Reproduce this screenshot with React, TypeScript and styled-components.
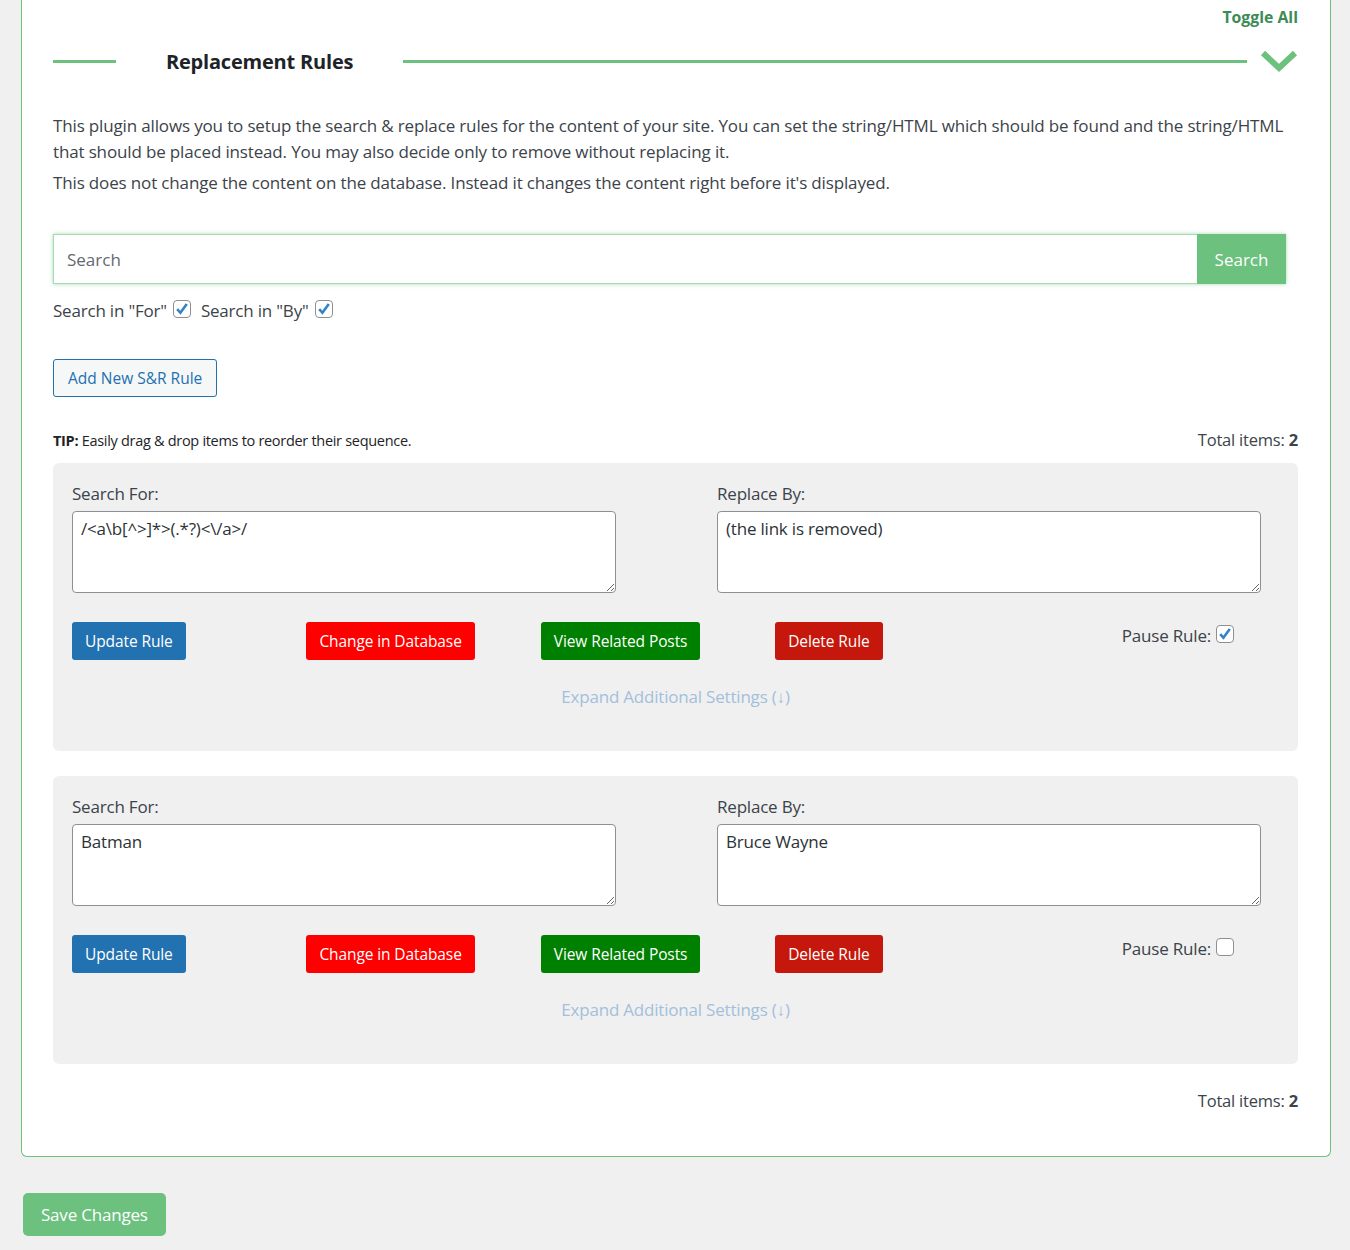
import React from 'react';
import styled, { createGlobalStyle } from 'styled-components';

const GlobalStyle = createGlobalStyle`
  html, body {
    margin: 0;
    padding: 0;
    background: #f0f0f1;
    font-family: 'Open Sans', 'Noto Sans', sans-serif;
    color: #3c434a;
  }
`;

const Page = styled.div`
  padding: 0 19px 14px 21px;
`;

const Panel = styled.div`
  background: #fff;
  border: 1px solid #6bc17d;
  border-top: none;
  border-radius: 0 0 6px 6px;
  padding: 4px 32px 44px 31px;
`;

const ToggleRow = styled.div`
  display: flex;
  justify-content: flex-end;
`;

const ToggleAll = styled.a`
  font-size: 15.8px;
  font-weight: 700;
  color: #3d8b57;
  cursor: pointer;
  line-height: 26px;
`;

const HeaderRow = styled.div`
  display: flex;
  align-items: center;
  margin-top: 13px;
  height: 36px;
`;

const Rule = styled.span<{ $grow?: boolean }>`
  height: 3px;
  background: #6bc17d;
  ${({ $grow }) => ($grow ? 'flex: 1;' : 'width: 63px;')}
`;

const Title = styled.h2`
  margin: 0 50px;
  font-size: 20px;
  font-weight: 700;
  color: #1d2327;
  letter-spacing: -0.2px;
`;

const Chevron = styled.svg`
  margin-left: 13px;
  flex: none;
`;

const Intro = styled.p`
  margin: 0;
  font-size: 17px;
  line-height: 26px;
  letter-spacing: -0.15px;
  & + & {
    margin-top: 5px;
  }
`;

const IntroBlock = styled.div`
  margin-top: 34px;
`;

const SearchBar = styled.div`
  display: flex;
  margin-top: 38px;
  width: 1233px;
  box-shadow: 0 0 4px rgba(107, 193, 125, 0.6);
`;

const SearchInput = styled.input`
  flex: 1;
  height: 50px;
  box-sizing: border-box;
  border: 1px solid #a8dbb3;
  border-right: none;
  padding: 0 13px;
  font-size: 17px;
  font-family: inherit;
  color: #3c434a;
  outline: none;
  &::placeholder {
    color: #646970;
  }
`;

const SearchButton = styled.button`
  width: 89px;
  height: 50px;
  border: none;
  background: #6bc17d;
  color: #fff;
  font-size: 17px;
  font-family: inherit;
  cursor: pointer;
`;

const CheckRow = styled.div`
  display: flex;
  align-items: center;
  gap: 10px;
  margin-top: 15px;
  font-size: 17px;
  letter-spacing: -0.2px;
`;

const CheckLabel = styled.label`
  display: inline-flex;
  align-items: center;
  gap: 6px;
`;

const Box = styled.span`
  display: inline-flex;
  align-items: center;
  justify-content: center;
  width: 18px;
  height: 18px;
  box-sizing: border-box;
  border: 1px solid #8c8f94;
  border-radius: 4px;
  background: #fff;
  position: relative;
  top: -2px;
`;

const OutlineButton = styled.button`
  margin-top: 37px;
  height: 38px;
  padding: 0 14px;
  border: 1px solid #2271b1;
  border-radius: 3px;
  background: #f6f7f7;
  color: #2271b1;
  font-size: 15.5px;
  font-family: inherit;
  cursor: pointer;
`;

const InfoRow = styled.div`
  display: flex;
  justify-content: space-between;
  align-items: baseline;
  margin-top: 31px;
`;

const Tip = styled.span`
  font-size: 14.5px;
  color: #1d2327;
  letter-spacing: -0.3px;
`;

const Total = styled.span`
  font-size: 16.5px;
  letter-spacing: -0.2px;
  b {
    font-weight: 700;
  }
`;

const Card = styled.div`
  margin-top: 12px;
  background: #f0f0f0;
  border-radius: 6px;
  padding: 20px 19px 43px;
  & + & {
    margin-top: 25px;
  }
`;

const Fields = styled.div`
  display: grid;
  grid-template-columns: 645px 1fr;
`;

const FieldLabel = styled.div`
  font-size: 17px;
  line-height: 22px;
  letter-spacing: -0.2px;
  margin-bottom: 6px;
`;

const Area = styled.textarea`
  display: block;
  width: 544px;
  height: 82px;
  box-sizing: border-box;
  border: 1px solid #8c8f94;
  border-radius: 4px;
  padding: 5px 8px;
  font-size: 17px;
  font-family: inherit;
  color: #2c3338;
  letter-spacing: -0.2px;
  resize: vertical;
  background: #fff;
`;

const Actions = styled.div`
  display: grid;
  grid-template-columns: repeat(4, 234.4px) 1fr;
  align-items: start;
  margin-top: 29px;
`;

const ActionButton = styled.button<{ $bg: string }>`
  justify-self: start;
  height: 38px;
  padding: 0 13px;
  border: none;
  border-radius: 3px;
  background: ${({ $bg }) => $bg};
  color: #fff;
  font-size: 15.5px;
  font-family: inherit;
  letter-spacing: -0.1px;
  cursor: pointer;
`;

const Pause = styled.label`
  justify-self: end;
  margin-right: 45px;
  display: inline-flex;
  align-items: center;
  gap: 5px;
  font-size: 17px;
  letter-spacing: -0.2px;
  margin-top: 2px;
`;

const Expand = styled.div`
  text-align: center;
  margin-top: 25px;
  font-size: 17px;
  color: #a3bfdc;
  letter-spacing: -0.2px;
  cursor: pointer;
`;

const BottomTotal = styled.div`
  display: flex;
  justify-content: flex-end;
  margin-top: 25px;
`;

const SaveButton = styled.button`
  margin: 36px 0 0 2px;
  height: 43px;
  padding: 0 18px;
  border: none;
  border-radius: 5px;
  background: #6bc17d;
  color: #fff;
  font-size: 17px;
  font-family: inherit;
  letter-spacing: -0.2px;
  cursor: pointer;
`;

const Check = ({ on }: { on: boolean }) => (
  <Box>
    {on && (
      <svg width="16" height="16" viewBox="0 0 16 16">
        <path d="M3.2 8.2l3.2 3.6L12.8 3" fill="none" stroke="#3582c4" strokeWidth="2.6" strokeLinejoin="miter" />
      </svg>
    )}
  </Box>
);

type RuleItem = { find: string; replace: string; paused: boolean };

const rules: RuleItem[] = [
  { find: '/<a\\b[^>]*>(.*?)<\\/a>/', replace: '(the link is removed)', paused: true },
  { find: 'Batman', replace: 'Bruce Wayne', paused: false },
];

const RuleCard = ({ rule }: { rule: RuleItem }) => (
  <Card>
    <Fields>
      <div>
        <FieldLabel>Search For:</FieldLabel>
        <Area defaultValue={rule.find} />
      </div>
      <div>
        <FieldLabel>Replace By:</FieldLabel>
        <Area defaultValue={rule.replace} />
      </div>
    </Fields>
    <Actions>
      <ActionButton $bg="#2271b1">Update Rule</ActionButton>
      <ActionButton $bg="#ff0000">Change in Database</ActionButton>
      <ActionButton $bg="#008000">View Related Posts</ActionButton>
      <ActionButton $bg="#c5170b">Delete Rule</ActionButton>
      <Pause>
        Pause Rule: <Check on={rule.paused} />
      </Pause>
    </Actions>
    <Expand>Expand Additional Settings (↓)</Expand>
  </Card>
);

export default function App() {
  return (
    <Page>
      <GlobalStyle />
      <Panel>
        <ToggleRow>
          <ToggleAll>Toggle All</ToggleAll>
        </ToggleRow>
        <HeaderRow>
          <Rule />
          <Title>Replacement Rules</Title>
          <Rule $grow />
          <Chevron width="38" height="24" viewBox="0 0 38 24">
            <path d="M3 4l16 15L35 4" fill="none" stroke="#6bc17d" strokeWidth="6" />
          </Chevron>
        </HeaderRow>
        <IntroBlock>
          <Intro>
            This plugin allows you to setup the search &amp; replace rules for the content of your site. You can set
            the string/HTML which should be found and the string/HTML that should be placed instead. You may also
            decide only to remove without replacing it.
          </Intro>
          <Intro>
            This does not change the content on the database. Instead it changes the content right before it's
            displayed.
          </Intro>
        </IntroBlock>
        <SearchBar>
          <SearchInput placeholder="Search" />
          <SearchButton>Search</SearchButton>
        </SearchBar>
        <CheckRow>
          <CheckLabel>
            Search in "For" <Check on />
          </CheckLabel>
          <CheckLabel>
            Search in "By" <Check on />
          </CheckLabel>
        </CheckRow>
        <OutlineButton>Add New S&amp;R Rule</OutlineButton>
        <InfoRow>
          <Tip>
            <b>TIP:</b> Easily drag &amp; drop items to reorder their sequence.
          </Tip>
          <Total>
            Total items: <b>2</b>
          </Total>
        </InfoRow>
        {rules.map((r, i) => (
          <RuleCard key={i} rule={r} />
        ))}
        <BottomTotal>
          <Total>
            Total items: <b>2</b>
          </Total>
        </BottomTotal>
      </Panel>
      <SaveButton>Save Changes</SaveButton>
    </Page>
  );
}
